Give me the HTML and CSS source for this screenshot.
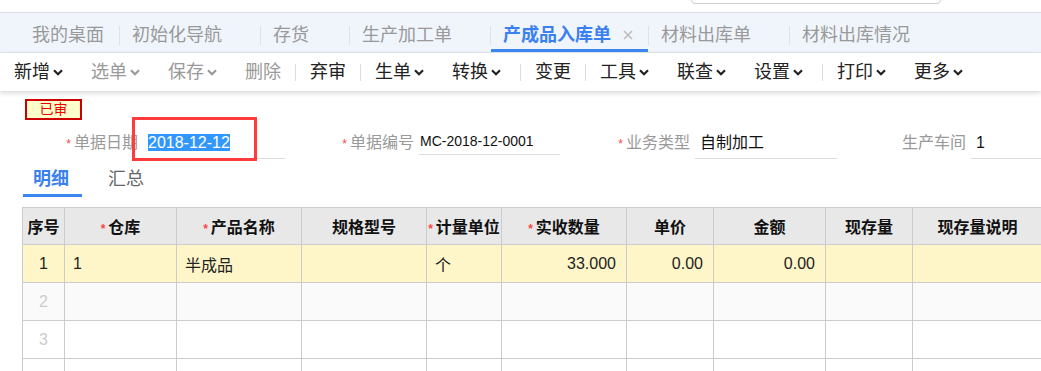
FILE: index.html
```html
<!DOCTYPE html>
<html lang="zh-CN">
<head>
    <meta charset="UTF-8">
    <title>产成品入库单</title>
    <link rel="stylesheet" href="styles.css">
</head>
<body>
    <div class="topbar"><div class="search-box"></div></div>

    <div class="tabs">
        <div class="tab tab-home">我的桌面</div>
        <span class="tab-sep"></span>
        <div class="tab">初始化导航</div>
        <span class="tab-sep"></span>
        <div class="tab tab-short">存货</div>
        <span class="tab-sep"></span>
        <div class="tab">生产加工单</div>
        <span class="tab-sep"></span>
        <div class="tab active">产成品入库单<svg class="tab-close" width="10" height="10" viewBox="0 0 10 10"><path d="M1 1 L9 9 M9 1 L1 9" stroke="#bbb" stroke-width="1.5" fill="none"/></svg></div>
        <span class="tab-sep"></span>
        <div class="tab">材料出库单</div>
        <span class="tab-sep"></span>
        <div class="tab">材料出库情况</div>
    </div>

    <div class="toolbar">
        <div class="tool">新增<svg class="caret" width="10" height="7" viewBox="0 0 10 7"><path d="M1 1.2 L5 5.2 L9 1.2" fill="none" stroke="currentColor" stroke-width="2.2"/></svg></div>
        <div class="tool disabled">选单<svg class="caret" width="10" height="7" viewBox="0 0 10 7"><path d="M1 1.2 L5 5.2 L9 1.2" fill="none" stroke="currentColor" stroke-width="2.2"/></svg></div>
        <div class="tool disabled">保存<svg class="caret" width="10" height="7" viewBox="0 0 10 7"><path d="M1 1.2 L5 5.2 L9 1.2" fill="none" stroke="currentColor" stroke-width="2.2"/></svg></div>
        <div class="tool disabled">删除</div>
        <span class="tool-sep"></span>
        <div class="tool">弃审</div>
        <span class="tool-sep"></span>
        <div class="tool">生单<svg class="caret" width="10" height="7" viewBox="0 0 10 7"><path d="M1 1.2 L5 5.2 L9 1.2" fill="none" stroke="currentColor" stroke-width="2.2"/></svg></div>
        <div class="tool tool-end">转换<svg class="caret" width="10" height="7" viewBox="0 0 10 7"><path d="M1 1.2 L5 5.2 L9 1.2" fill="none" stroke="currentColor" stroke-width="2.2"/></svg></div>
        <span class="tool-sep"></span>
        <div class="tool">变更</div>
        <span class="tool-sep"></span>
        <div class="tool">工具<svg class="caret" width="10" height="7" viewBox="0 0 10 7"><path d="M1 1.2 L5 5.2 L9 1.2" fill="none" stroke="currentColor" stroke-width="2.2"/></svg></div>
        <div class="tool">联查<svg class="caret" width="10" height="7" viewBox="0 0 10 7"><path d="M1 1.2 L5 5.2 L9 1.2" fill="none" stroke="currentColor" stroke-width="2.2"/></svg></div>
        <div class="tool tool-end">设置<svg class="caret" width="10" height="7" viewBox="0 0 10 7"><path d="M1 1.2 L5 5.2 L9 1.2" fill="none" stroke="currentColor" stroke-width="2.2"/></svg></div>
        <span class="tool-sep"></span>
        <div class="tool">打印<svg class="caret" width="10" height="7" viewBox="0 0 10 7"><path d="M1 1.2 L5 5.2 L9 1.2" fill="none" stroke="currentColor" stroke-width="2.2"/></svg></div>
        <div class="tool">更多<svg class="caret" width="10" height="7" viewBox="0 0 10 7"><path d="M1 1.2 L5 5.2 L9 1.2" fill="none" stroke="currentColor" stroke-width="2.2"/></svg></div>
    </div>

    <div class="bill">
        <div class="badge">已审</div>

        <div class="form-row">
            <div class="field">
                <div class="field-label"><i class="req">*</i>单据日期</div>
                <div class="field-input"><span class="selected">2018-12-12</span></div>
            </div>
            <div class="field">
                <div class="field-label"><i class="req">*</i>单据编号</div>
                <div class="field-input field-code">MC-2018-12-0001</div>
            </div>
            <div class="field">
                <div class="field-label"><i class="req">*</i>业务类型</div>
                <div class="field-input">自制加工</div>
            </div>
            <div class="field">
                <div class="field-label">生产车间</div>
                <div class="field-input">1</div>
            </div>
        </div>

        <div class="mark"></div>

        <div class="subtabs">
            <div class="subtab active">明细</div>
            <div class="subtab">汇总</div>
        </div>

        <div class="grid-wrap">
            <table class="grid">
                <colgroup>
                    <col style="width: 42px">
                    <col style="width: 112px">
                    <col style="width: 125px">
                    <col style="width: 125px">
                    <col style="width: 75px">
                    <col style="width: 125px">
                    <col style="width: 87px">
                    <col style="width: 112px">
                    <col style="width: 87px">
                    <col style="width: 130px">
                </colgroup>
                <thead>
                    <tr>
                        <th>序号</th>
                        <th><i class="req">*</i>仓库</th>
                        <th><i class="req">*</i>产品名称</th>
                        <th>规格型号</th>
                        <th><i class="req">*</i>计量单位</th>
                        <th><i class="req">*</i>实收数量</th>
                        <th>单价</th>
                        <th>金额</th>
                        <th>现存量</th>
                        <th>现存量说明</th>
                    </tr>
                </thead>
                <tbody>
                    <tr class="current">
                        <td class="seq">1</td>
                        <td>1</td>
                        <td>半成品</td>
                        <td></td>
                        <td>个</td>
                        <td class="num">33.000</td>
                        <td class="num">0.00</td>
                        <td class="num">0.00</td>
                        <td></td>
                        <td></td>
                    </tr>
                    <tr class="alt">
                        <td class="seq empty">2</td>
                        <td></td><td></td><td></td><td></td><td></td><td></td><td></td><td></td><td></td>
                    </tr>
                    <tr>
                        <td class="seq empty">3</td>
                        <td></td><td></td><td></td><td></td><td></td><td></td><td></td><td></td><td></td>
                    </tr>
                    <tr>
                        <td class="seq empty"></td>
                        <td></td><td></td><td></td><td></td><td></td><td></td><td></td><td></td><td></td>
                    </tr>
                </tbody>
            </table>
        </div>
    </div>
</body>
</html>
```

FILE: styles.css
```css
body {
    margin: 0;
    font-family: "Liberation Sans", "Noto Sans CJK SC", sans-serif;
    font-size: 16px;
    color: #222;
    background: #fff;
    overflow: hidden;
}
.topbar {
    height: 12px;
    overflow: hidden;
}
.search-box {
    width: 248px;
    height: 24px;
    margin: -22px 0 0 691px;
    border: 1px solid #ccc;
    border-radius: 4px;
}
.tabs {
    display: flex;
    align-items: flex-start;
    height: 39px;
    background: #f0f5fc;
    border-top: 1px solid #dcdcdc;
    border-bottom: 1px solid #e3e7ee;
}
.tab {
    display: flex;
    align-items: center;
    padding: 11px 38px 3px 12px;
    line-height: 22px;
    font-size: 18px;
    color: #999;
    border-bottom: 3px solid transparent;
    white-space: nowrap;
}
.tab-home {
    padding-left: 32px;
    padding-right: 15px;
}
.tab-short {
    padding-right: 40px;
}
.tab.active {
    color: #3b80f0;
    font-weight: bold;
    padding-right: 15px;
    border-bottom-color: #3b86f2;
}
.tab-close {
    margin-left: 12px;
}
.tab-sep {
    width: 1px;
    height: 19px;
    margin-top: 13px;
    background: #dde2e9;
}
.toolbar {
    position: relative;
    display: flex;
    align-items: center;
    height: 38px;
    background: #fff;
    box-shadow: 0 2px 5px rgba(0, 0, 0, 0.16);
}
.tool {
    display: flex;
    align-items: center;
    padding: 0 14px;
    line-height: 38px;
    font-size: 18px;
    color: #222;
}
.tool.disabled {
    color: #999;
}
.tool-end {
    padding-right: 19px;
}
.caret {
    margin-left: 3px;
}
.tool-sep {
    width: 1px;
    height: 17px;
    background: #ddd;
}
.bill {
    position: relative;
    padding-top: 8px;
    overflow: hidden;
}
.badge {
    box-sizing: border-box;
    width: 57px;
    height: 21px;
    margin-left: 25px;
    border: 2px solid #c00;
    background: #ffffcc;
    color: #e00;
    font-size: 14px;
    line-height: 17px;
    text-align: center;
}
.form-row {
    display: flex;
    align-items: flex-start;
    margin-top: 8px;
    padding-left: 9px;
}
.field {
    display: flex;
    width: 276px;
    flex-shrink: 0;
}
.field-label {
    width: 129px;
    padding-right: 5px;
    text-align: right;
    line-height: 30px;
    color: #999;
}
.field-input {
    width: 137px;
    height: 30px;
    padding-left: 5px;
    line-height: 30px;
    color: #111;
    border-bottom: 1px solid #ddd;
    white-space: nowrap;
}
.field-code {
    width: 140px;
    height: 26px;
    padding-left: 1px;
    line-height: 26px;
    font-size: 14px;
}
.selected {
    background: #3297fd;
    color: #fff;
}
.req {
    font-style: normal;
    font-size: 12px;
    color: #f44;
    margin-right: 3px;
}
.mark {
    position: absolute;
    left: 132px;
    top: 26px;
    width: 119px;
    height: 38px;
    border: 3px solid #ff3b3b;
}
.subtabs {
    display: flex;
    margin-top: 9px;
    padding-left: 23px;
}
.subtab {
    padding: 0 13px 4px 10px;
    margin-right: 16px;
    line-height: 22px;
    font-size: 18px;
    color: #666;
    border-bottom: 3px solid transparent;
}
.subtab.active {
    color: #3b80f0;
    font-weight: bold;
    border-bottom-color: #3b86f2;
}
.grid-wrap {
    margin: 10px 0 0 22px;
    overflow: hidden;
}
.grid {
    table-layout: fixed;
    width: 1020px;
    border-collapse: collapse;
}
.grid th,
.grid td {
    border: 1px solid #ccc;
    padding: 0 8px;
    white-space: nowrap;
    overflow: hidden;
}
.grid th {
    height: 36px;
    padding: 0;
    background: #e8e8e8;
    font-weight: bold;
    text-align: center;
    color: #111;
}
.grid td {
    height: 37px;
    text-align: left;
}
.grid .current td {
    background: #fef6c8;
}
.grid .alt td {
    background: #fafafa;
}
.grid td.seq {
    text-align: center;
    padding: 0;
}
.grid td.empty {
    color: #ccc;
}
.grid td.num {
    text-align: right;
    padding-right: 10px;
}
```
